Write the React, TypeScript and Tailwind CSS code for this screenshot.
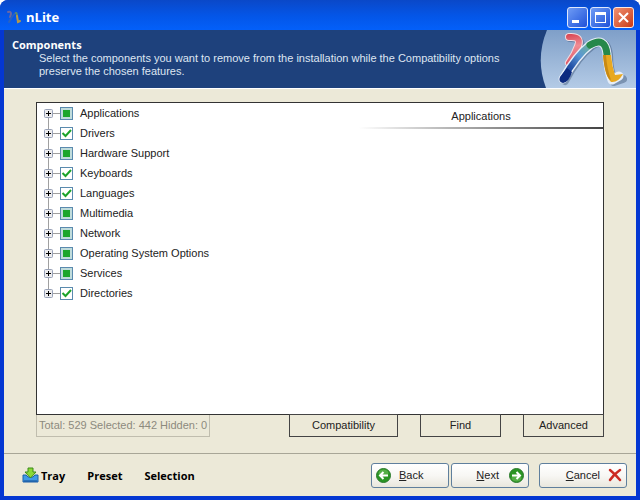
import React, { useEffect, useRef, useState } from 'react';

type CheckState = 'checked' | 'partial' | 'empty';

interface ComponentNode {
  id: string;
  label: string;
  state: CheckState;
}

const initialNodes: ComponentNode[] = [
  { id: 'applications', label: 'Applications', state: 'partial' },
  { id: 'drivers', label: 'Drivers', state: 'checked' },
  { id: 'hardware', label: 'Hardware Support', state: 'partial' },
  { id: 'keyboards', label: 'Keyboards', state: 'checked' },
  { id: 'languages', label: 'Languages', state: 'checked' },
  { id: 'multimedia', label: 'Multimedia', state: 'partial' },
  { id: 'network', label: 'Network', state: 'partial' },
  { id: 'os-options', label: 'Operating System Options', state: 'partial' },
  { id: 'services', label: 'Services', state: 'partial' },
  { id: 'directories', label: 'Directories', state: 'checked' },
];

const TitleIcon = () => (
  <svg width="16" height="16" viewBox="0 0 16 16" fill="none" strokeWidth="2" strokeLinecap="round">
    <path d="M2 3q3-1 3 2L4 8" stroke="#6a68a4" />
    <path d="M3 13Q8 4 10 4" stroke="#2a62c0" />
    <path d="M10 4q1 0 1 3" stroke="#5c8a70" />
    <path d="M11 7l1 6 2-1" stroke="#b79a4a" />
  </svg>
);

const HeaderLogo = () => (
  <svg width="96" height="58" viewBox="0 0 96 58" fill="none" strokeLinecap="round" strokeLinejoin="round">
    <defs>
      <linearGradient id="sky" x1="0" y1="0" x2="0" y2="1">
        <stop offset="0" stopColor="#7f9fc8" />
        <stop offset="1" stopColor="#b4cbe6" />
      </linearGradient>
      <linearGradient id="leg" x1="22" y1="50" x2="60" y2="12" gradientUnits="userSpaceOnUse">
        <stop offset="0" stopColor="#0d2f8c" />
        <stop offset="0.3" stopColor="#2453a8" />
        <stop offset="0.55" stopColor="#5a96d4" />
        <stop offset="0.8" stopColor="#6aaea0" />
        <stop offset="1" stopColor="#2f9150" />
      </linearGradient>
      <linearGradient id="rose" x1="28" y1="4" x2="34" y2="36" gradientUnits="userSpaceOnUse">
        <stop offset="0" stopColor="#d84452" />
        <stop offset="0.4" stopColor="#f08c94" />
        <stop offset="1" stopColor="#d85060" />
      </linearGradient>
    </defs>
    <path d="M7 0Q-5 29 6 58H96V0Z" fill="url(#sky)" />
    <g stroke="#3d5678" strokeWidth="8" opacity="0.45">
      <path d="M30 8q13 0 10 10-3 9-10 17" />
      <path d="M25 51Q38 26 52 16 67 6 69 25q0 14 5 27l9-3" />
    </g>

    {/* Pink stroke */}
    <path d="M29 7q13-1 9 9-3 9-9 17" stroke="#f0dce2" strokeWidth="8" />
    <path d="M29 7q13-1 9 9-3 9-9 17" stroke="url(#rose)" strokeWidth="6" />

    {/* White rim under the arch, then its coloured parts */}
    <path d="M23 49Q37 25 50 15 65 6 67 24q1 16 5 26l7-4" stroke="#e6eef8" strokeWidth="9" />
    <path d="M23 49Q37 25 50 15" stroke="url(#leg)" strokeWidth="6" />
    <path d="M27 38l5 4q-3 10-9 11-5-1-3-6z" fill="#0c2a80" />
    <path d="M50 15Q65 6 67 24" stroke="#26884a" strokeWidth="7" />
    <path d="M63 25h8q1 11 4 20l8-1q-5 9-12 8-6-6-8-27z" fill="#e8a820" />
    <path d="M63 25h3q1 14 5 25-6-2-8-25z" fill="#c98a14" />
  </svg>
);

const TrayIcon = () => (
  <svg width="17" height="16" viewBox="0 0 17 16">
    <path d="M1 8h3l2 2h5l2-2h3v7H1z" fill="#3f9ae6" stroke="#1b5faa" />
    <path d="M2 14h13" stroke="#164c90" />
    <path d="M6 1h5v4h3l-5.500 6L3 5h3z" fill="#8ad836" stroke="#3c8c18" />
  </svg>
);

const ArrowIcon = ({ flip = false }: { flip?: boolean }) => (
  <svg width="15" height="15" viewBox="0 0 15 15" className={flip ? 'rotate-180' : ''}>
    <circle cx="7.500" cy="7.500" r="7" fill="#2a9423" stroke="#2c7a2c" />
    <ellipse cx="7.500" cy="5" rx="5" ry="3.500" fill="#72bf5c" opacity="0.6" />
    <path d="M12 7.500H4M7.500 4L4 7.500 7.500 11" fill="none" stroke="#fff" strokeWidth="2" />
  </svg>
);

const CancelIcon = () => (
  <svg width="14" height="14" viewBox="0 0 14 14">
    <path d="M2 2q5 4 10 10M12 2Q6 6 2 12" fill="none" stroke="#cc2a22" strokeWidth="2.500" strokeLinecap="round" />
  </svg>
);

interface TreeRowProps {
  node: ComponentNode;
  first: boolean;
  last: boolean;
  onToggle: (id: string) => void;
}

const TreeRow: React.FC<TreeRowProps> = ({ node, first, last, onToggle }) => {
  const ref = useRef<HTMLInputElement>(null);

  useEffect(() => {
    if (ref.current) ref.current.indeterminate = node.state === 'partial';
  }, [node.state]);

  return (
    <li className="flex h-5 items-center">
      {/* Expander with its connector lines */}
      <button type="button" aria-label={`Expand ${node.label}`} className="block h-5 w-4">
        <svg width="16" height="20" viewBox="0 0 16 20" fill="none">
          <path d={`M4.500 ${first ? 10 : 0}V${last ? 10 : 20}`} stroke="#a0a0a0" />
          <path d="M9 10.500h7" stroke="#a0a0a0" />
          <rect x="0.500" y="6.500" width="8" height="8" rx="1" fill="#ececee" stroke="#98a2b8" />
          <path d="M2 10.500h5M4.500 8v5" stroke="#000" />
        </svg>
      </button>
      <label className="flex items-center gap-[7px]">
        <span className="relative block size-[13px]">
          <input
            ref={ref}
            type="checkbox"
            checked={node.state === 'checked'}
            onChange={() => onToggle(node.id)}
            className="block size-[13px] appearance-none border border-[#5a8aae] bg-white indeterminate:bg-[#c0dcdc]"
          />
          <svg className="pointer-events-none absolute inset-0" width="13" height="13" viewBox="0 0 13 13" fill="none">
            {node.state === 'partial' && <rect x="3" y="3" width="7" height="7" fill="#1ca62c" />}
            {node.state === 'checked' && (
              <path d="M2.500 6L5.500 9 11 3" stroke="#1ba32b" strokeWidth="2" />
            )}
          </svg>
        </span>
        <span>{node.label}</span>
      </label>
    </li>
  );
};

const captionButton =
  'flex size-[21px] items-center justify-center rounded-[3px] border border-[#dfe8fc] bg-linear-to-br from-[#6f9bf5] to-[#2050d8]';
const tabButton = 'h-[23px] border border-[#444] bg-[#ece9d8]';
const wizardButton =
  'flex h-[25px] items-center rounded-[3px] border border-[#5f7f9d] bg-linear-to-b from-white via-[#f8f7f4] to-[#e9e7dd]';

export default function App() {
  const [nodes, setNodes] = useState(initialNodes);

  const toggle = (id: string) => {
    setNodes(prev =>
      prev.map(n => (n.id === id ? { ...n, state: n.state === 'checked' ? 'empty' : 'checked' } : n))
    );
  };

  return (
    <div className="min-h-screen bg-white font-['Liberation_Sans',Arial,sans-serif] text-[11px] leading-[13px] text-[#222]">
      <div className="flex min-h-screen flex-col overflow-hidden rounded-t-lg bg-[#0437d2]">
        {/* Title bar */}
        <header className="flex h-[30px] items-center justify-between bg-linear-to-b from-[#0a48c8] via-[#0455e6] to-[#0360fa] pt-1 pr-1.5 pl-1.5">
          <div className="flex items-center gap-1">
            <TitleIcon />
            <h1 className="font-['Open_Sans',sans-serif] text-[13px] font-bold text-white">nLite</h1>
          </div>
          <div className="flex gap-0.5">
            <button type="button" aria-label="Minimize" className={captionButton}>
              <svg width="13" height="13" viewBox="0 0 13 13"><path d="M1 9h7v3H1z" fill="#fff" /></svg>
            </button>
            <button type="button" aria-label="Maximize" className={captionButton}>
              <svg width="13" height="13" viewBox="0 0 13 13">
                <path d="M1 1h11v11H1zM2 4v7h9V4z" fill="#fff" fillRule="evenodd" />
              </svg>
            </button>
            <button
              type="button"
              aria-label="Close"
              className="flex size-[21px] items-center justify-center rounded-[3px] border border-[#fce8e0] bg-linear-to-br from-[#f09070] to-[#c83810]"
            >
              <svg width="13" height="13" viewBox="0 0 13 13"><path d="M2 2l9 9M11 2l-9 9" stroke="#fff" strokeWidth="2" /></svg>
            </button>
          </div>
        </header>

        <div className="mx-1 mb-1 flex flex-1 flex-col bg-[#ece9d8]">
          {/* Banner */}
          <section className="flex h-[59px] justify-between border-b border-white bg-[#1e417c] text-white">
            <div className="flex flex-col gap-px pt-2 pl-2">
              <h2 className="font-['Open_Sans',sans-serif] font-bold">Components</h2>
              <p className="pl-[27px] text-[#dfe6f2]">
                Select the components you want to remove from the installation while the Compatibility options
                <br />
                preserve the chosen features.
              </p>
            </div>
            <HeaderLogo />
          </section>

          {/* Component tree */}
          <main className="flex flex-1 flex-col px-8 pt-[13px]">
            <div className="flex flex-1 justify-between border border-[#333] bg-white">
              <ul className="pl-[7px]">
                {nodes.map((node, i) => (
                  <TreeRow
                    key={node.id}
                    node={node}
                    first={i === 0}
                    last={i === nodes.length - 1}
                    onToggle={toggle}
                  />
                ))}
              </ul>
              <div className="w-[244px]">
                <h3 className="pt-[7px] pb-1 text-center">Applications</h3>
                <div className="h-0.5 bg-linear-to-r from-white to-[#444]" />
              </div>
            </div>
            <div className="-mt-px flex items-start justify-between">
              <p className="mt-px border border-t-0 border-[#c0bdae] px-0.5 py-1 text-[#8c8a7e]">
                Total: 529 Selected: 442 Hidden: 0
              </p>
              <div className="flex gap-[22px]">
                <button type="button" className={`${tabButton} w-[109px]`}>Compatibility</button>
                <button type="button" className={`${tabButton} w-[81px]`}>Find</button>
                <button type="button" className={`${tabButton} w-[81px]`}>Advanced</button>
              </div>
            </div>
          </main>

          {/* Footer */}
          <footer className="mt-4 flex h-[43px] items-center justify-between border-t border-[#a8a697] pr-[9px] pl-[18px]">
            <nav className="flex gap-[22px] font-['Open_Sans',sans-serif] font-bold text-black">
              <button type="button" className="flex items-center gap-0.5"><TrayIcon />Tray</button>
              <button type="button">Preset</button>
              <button type="button">Selection</button>
            </nav>
            <div className="flex gap-0.5">
              <button type="button" className={`${wizardButton} w-[78px] gap-2 pl-1`}>
                <ArrowIcon />
                <span><u>B</u>ack</span>
              </button>
              <button type="button" className={`${wizardButton} w-[78px] justify-end gap-2.5 pr-1`}>
                <span><u>N</u>ext</span>
                <ArrowIcon flip />
              </button>
              <button type="button" className={`${wizardButton} ml-2 w-[88px] justify-end gap-2 pr-1`}>
                <span><u>C</u>ancel</span>
                <CancelIcon />
              </button>
            </div>
          </footer>
        </div>
      </div>
    </div>
  );
}
